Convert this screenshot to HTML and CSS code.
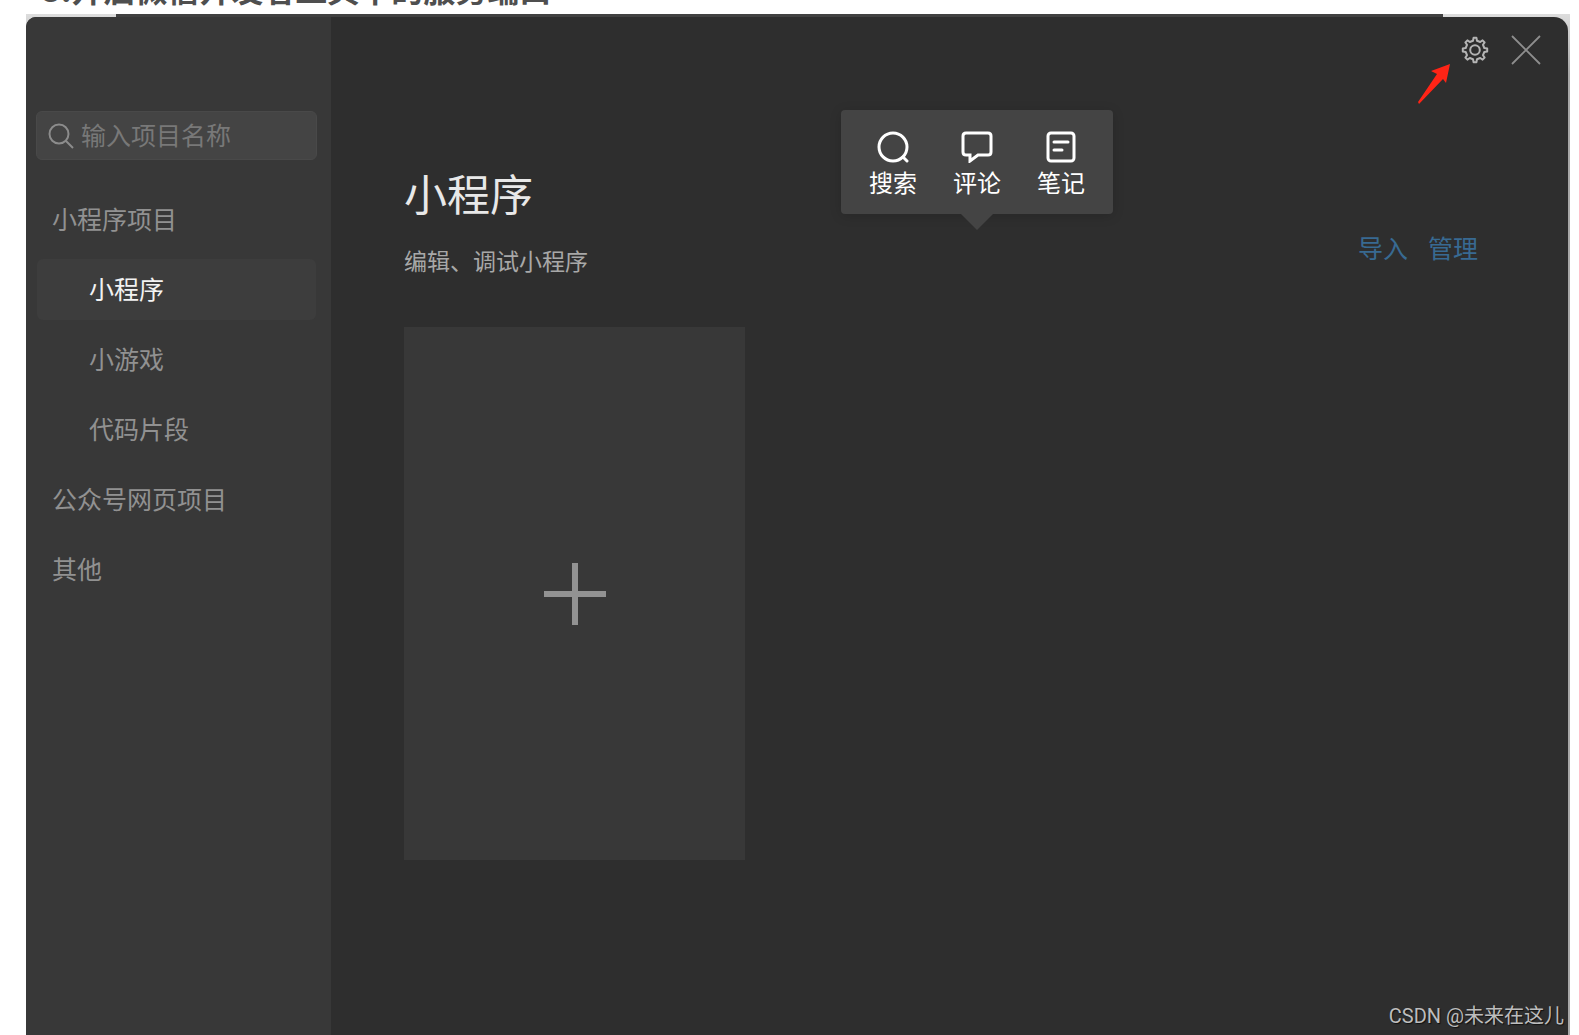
FILE: index.html
```html
<!DOCTYPE html>
<html lang="zh-CN">
<head>
  <meta charset="UTF-8" />
  <meta name="viewport" content="width=device-width, initial-scale=1.0"/>
  <title>小程序</title>
  <link rel="stylesheet" href="styles.css">
</head>
<body>

<header class="article-title">
  <h2>3.开启微信开发者工具中的服务端口</h2>
</header>

<div class="frame">
  <div class="frame-top"></div>

  <div class="window">
    <aside class="sidebar">
      <label class="search">
        <svg width="26" height="26" viewBox="0 0 26 26" fill="none" stroke="currentColor" stroke-width="2">
          <circle cx="11" cy="11" r="9.5"/>
          <path d="M18 18l7 7"/>
        </svg>
        <input type="text" placeholder="输入项目名称" aria-label="输入项目名称">
      </label>

      <nav class="menu">
        <a href="#">小程序项目</a>
        <a href="#" class="sub active">小程序</a>
        <a href="#" class="sub">小游戏</a>
        <a href="#" class="sub">代码片段</a>
        <a href="#">公众号网页项目</a>
        <a href="#">其他</a>
      </nav>
    </aside>

    <main class="main">
      <div class="toolbar">
        <button class="settings" aria-label="设置">
          <svg width="28" height="28" viewBox="-14 -14 28 28" fill="none" stroke="currentColor" stroke-width="2" stroke-linejoin="round">
            <path d="M-2-9.3L-1.4-12.2H1.4L2-9.3L5.2-8L7.6-9.6L9.6-7.6L8-5.2L9.3-2L12.2-1.4V1.4L9.3 2L8 5.2L9.6 7.6L7.6 9.6L5.2 8L2 9.3L1.4 12.2H-1.4L-2 9.3L-5.2 8L-7.6 9.6L-9.6 7.6L-8 5.2L-9.3 2L-12.2 1.4V-1.4L-9.3-2L-8-5.2L-9.6-7.6L-7.6-9.6L-5.2-8Z"/>
            <circle r="4.8"/>
          </svg>
        </button>
        <button class="close" aria-label="关闭">
          <svg width="30" height="30" viewBox="0 0 30 30" fill="none" stroke="currentColor" stroke-width="1.8">
            <path d="M1 1l28 28M29 1L1 29"/>
          </svg>
        </button>
        <svg class="pointer" width="34" height="42" viewBox="0 0 34 42">
          <path fill="#ff2416" d="M33 1L14 8L20 11L1 39L2 41L26 16L29 20Z"/>
        </svg>
      </div>

      <section class="content">
        <div class="content-head">
          <div>
            <h1>小程序</h1>
            <p>编辑、调试小程序</p>
          </div>
          <div class="actions">
            <a href="#">导入</a>
            <a href="#">管理</a>
          </div>
        </div>

        <button class="add-card" aria-label="新建">
          <svg width="62" height="62" viewBox="0 0 62 62" stroke="currentColor" stroke-width="6">
            <path d="M31 0v62M0 31h62"/>
          </svg>
        </button>
      </section>
    </main>
  </div>

  <!-- selection popup -->
  <div class="popup">
    <button>
      <svg width="32" height="32" viewBox="0 0 32 32">
        <circle cx="16" cy="16" r="14"/>
        <path d="M26 26l4 4"/>
      </svg>
      搜索
    </button>
    <button>
      <svg width="32" height="32" viewBox="0 0 32 32">
        <path d="M5 2h22q3 0 3 3v16q0 3-3 3H17l-8 6v-6H5q-3 0-3-3V5q0-3 3-3z"/>
      </svg>
      评论
    </button>
    <button>
      <svg width="32" height="32" viewBox="0 0 32 32">
        <rect x="3" y="2" width="26" height="28" rx="3"/>
        <path d="M9 11h14M9 19h8"/>
      </svg>
      笔记
    </button>
  </div>

  <div class="watermark">CSDN @未来在这儿</div>
</div>

</body>
</html>
```

FILE: styles.css
```css
:root {
  --bg: #2e2e2e;
  --panel: #383838;
  --popup: #444444;
  --muted: #919191;
  --link: #386a92;
}

* {
  box-sizing: border-box;
}

body {
  margin: 0;
  height: 100vh;
  display: flex;
  flex-direction: column;
  overflow: hidden;
  background: #ffffff;
  font-family: "Noto Sans CJK SC", sans-serif;
}

h1, h2, p {
  margin: 0;
  font-weight: 400;
}

a {
  text-decoration: none;
}

button {
  border: none;
  padding: 0;
  background: none;
  font-family: inherit;
  cursor: pointer;
}

svg {
  display: block;
  flex: none;
}

.article-title {
  height: 14px;
  flex: none;
  display: flex;
  align-items: flex-end;
  overflow: hidden;
  padding: 0 42px 4px;
}

.article-title h2 {
  color: #4f4f4f;
  font-size: 32px;
  line-height: 44px;
  font-weight: 700;
}

.frame {
  position: relative;
  flex: 1;
  display: flex;
  flex-direction: column;
  margin: 0 9px 0 26px;
  padding-right: 2px;
  background: linear-gradient(#dddddd, #a8a8a8 60px);
}

.frame-top {
  height: 3px;
  margin: 0 125px 0 90px;
  background: #414141;
}

.window {
  flex: 1;
  display: flex;
  background: var(--bg);
  border-radius: 10px 14px 0 0;
  overflow: hidden;
}

.sidebar {
  width: 305px;
  flex: none;
  padding: 94px 14px 0 10px;
  background: var(--panel);
}

.search {
  height: 49px;
  display: flex;
  align-items: center;
  gap: 7px;
  padding: 0 11px;
  background: #444444;
  border: 1px solid #494949;
  border-radius: 6px;
  color: #8c8c8c;
}

.search input {
  flex: 1;
  min-width: 0;
  padding: 0 0 4px;
  border: none;
  outline: none;
  background: none;
  color: #dddddd;
  font-family: inherit;
  font-size: 25px;
}

.search input::placeholder {
  color: #787878;
}

.menu {
  display: flex;
  flex-direction: column;
  gap: 9px;
  margin: 29px 1px 0;
}

.menu a {
  padding: 0 0 3px 15px;
  border-radius: 6px;
  color: var(--muted);
  font-size: 25px;
  line-height: 58px;
}

.menu .sub {
  padding-left: 52px;
}

.menu .active {
  background: #3d3d3d;
  color: #f2f2f2;
}

.main {
  flex: 1;
}

.toolbar {
  position: relative;
  display: flex;
  justify-content: flex-end;
  align-items: center;
  gap: 22px;
  padding: 18px 27px 0;
}

.settings {
  color: #b4b4b4;
}

.close {
  color: #8e8e8e;
}

.pointer {
  position: absolute;
  top: 46px;
  right: 117px;
}

.content {
  padding: 101px 90px 0 73px;
}

.content-head {
  display: flex;
  justify-content: space-between;
  align-items: flex-end;
}

.content-head h1 {
  color: #e8e8e8;
  font-size: 43px;
  line-height: 52px;
}

.content-head p {
  margin-top: 26px;
  color: #a8a8a8;
  font-size: 23px;
  line-height: 32px;
}

.actions {
  display: flex;
  gap: 20px;
  margin-bottom: 13px;
}

.actions a {
  color: var(--link);
  font-size: 25px;
  line-height: 32px;
}

.add-card {
  width: 341px;
  height: 533px;
  display: flex;
  align-items: center;
  justify-content: center;
  margin-top: 51px;
  background: var(--panel);
  color: #929292;
}

.popup {
  position: absolute;
  top: 96px;
  left: 815px;
  display: flex;
  gap: 36px;
  padding: 21px 28px 14px;
  background: var(--popup);
  border-radius: 4px;
  box-shadow: 0 2px 12px rgba(0, 0, 0, 0.15);
}

.popup::after {
  content: "";
  position: absolute;
  top: 100%;
  left: 50%;
  margin-left: -16px;
  border: 16px solid transparent;
  border-top-color: var(--popup);
  border-bottom: none;
}

.popup button {
  display: flex;
  flex-direction: column;
  align-items: center;
  gap: 1px;
  color: #ffffff;
  font-size: 24px;
  line-height: 36px;
}

.popup svg {
  fill: none;
  stroke: currentColor;
  stroke-width: 3;
  stroke-linecap: round;
}

.watermark {
  position: absolute;
  right: 6px;
  bottom: 4px;
  color: #bdbdbd;
  font-family: Roboto, "Noto Sans CJK SC", sans-serif;
  font-size: 20px;
  line-height: 30px;
  text-shadow: 1px 1px 1px #111111;
}
```
